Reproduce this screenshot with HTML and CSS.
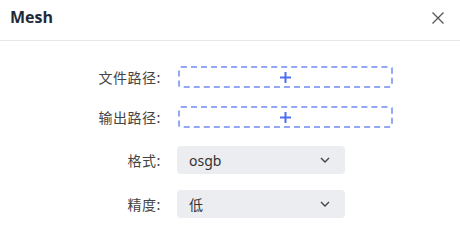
FILE: index.html
```html
<!DOCTYPE html>
<html lang="zh">
<head>
<meta charset="utf-8">
<link rel="stylesheet" href="styles.css">
</head>
<body>
<div class="dialog">
  <div class="header">
    <span class="title">Mesh</span>
    <svg class="close" width="12" height="12" viewBox="0 0 12 12"><path d="M0.5 0.5 L11.5 11.5 M11.5 0.5 L0.5 11.5" stroke="#555" stroke-width="1.3" fill="none"/></svg>
  </div>
  <div class="form">
    <div class="row row-upload">
      <label class="label">文件路径:</label>
      <div class="upload"><svg width="11" height="11" viewBox="0 0 11 11"><path d="M5.5 0 V11 M0 5.5 H11" stroke="#4d6ff0" stroke-width="2"/></svg></div>
    </div>
    <div class="row row-upload">
      <label class="label">输出路径:</label>
      <div class="upload"><svg width="11" height="11" viewBox="0 0 11 11"><path d="M5.5 0 V11 M0 5.5 H11" stroke="#4d6ff0" stroke-width="2"/></svg></div>
    </div>
    <div class="row row-select">
      <label class="label">格式:</label>
      <div class="select"><span class="value">osgb</span><svg width="10" height="6" viewBox="0 0 10 6"><path d="M1 1 L5 5 L9 1" stroke="#444" stroke-width="1.4" fill="none"/></svg></div>
    </div>
    <div class="row row-select">
      <label class="label">精度:</label>
      <div class="select"><span class="value">低</span><svg width="10" height="6" viewBox="0 0 10 6"><path d="M1 1 L5 5 L9 1" stroke="#444" stroke-width="1.4" fill="none"/></svg></div>
    </div>
  </div>
</div>
</body>
</html>
```
FILE: styles.css
```css
html, body {
  margin: 0;
  padding: 0;
  background: #fff;
}
body {
  width: 460px;
  height: 243px;
  overflow: hidden;
  font-family: "Noto Sans", "Noto Sans CJK SC", sans-serif;
  color: #333;
}
.header {
  height: 41px;
  border-bottom: 1px solid #e8e8e8;
  display: flex;
  align-items: center;
  justify-content: space-between;
  padding: 0 16px 0 10px;
  box-sizing: border-box;
}
.title {
  font-family: "Open Sans", "Noto Sans", sans-serif;
  font-weight: 700;
  font-size: 16px;
  color: #1f2a37;
  margin-top: -6px;
}
.close {
  margin-top: -5px;
}
.form {
  padding-top: 25px;
  display: flex;
  flex-direction: column;
}
.row {
  display: flex;
  align-items: center;
}
.row-upload { height: 22px; margin-bottom: 18px; }
.row-select { height: 28px; margin-bottom: 16px; }
.label {
  width: 177px;
  text-align: right;
  padding-right: 16px;
  box-sizing: border-box;
  font-family: "Noto Sans CJK SC", sans-serif;
  font-size: 14px;
  letter-spacing: 0.5px;
  color: #444;
}
.upload {
  width: 215px;
  height: 22px;
  box-sizing: border-box;
  border: 2px dashed #93a8f4;
  border-radius: 3px;
  display: flex;
  align-items: center;
  justify-content: center;
  margin-left: 1px;
}
.select {
  width: 168px;
  height: 28px;
  box-sizing: border-box;
  background: #ecedf0;
  border-radius: 4px;
  display: flex;
  align-items: center;
  justify-content: space-between;
  padding: 0 15px 0 12px;
}
.value {
  font-family: "Noto Sans", "Noto Sans CJK SC", sans-serif;
  font-size: 14px;
  color: #333;
}
```
